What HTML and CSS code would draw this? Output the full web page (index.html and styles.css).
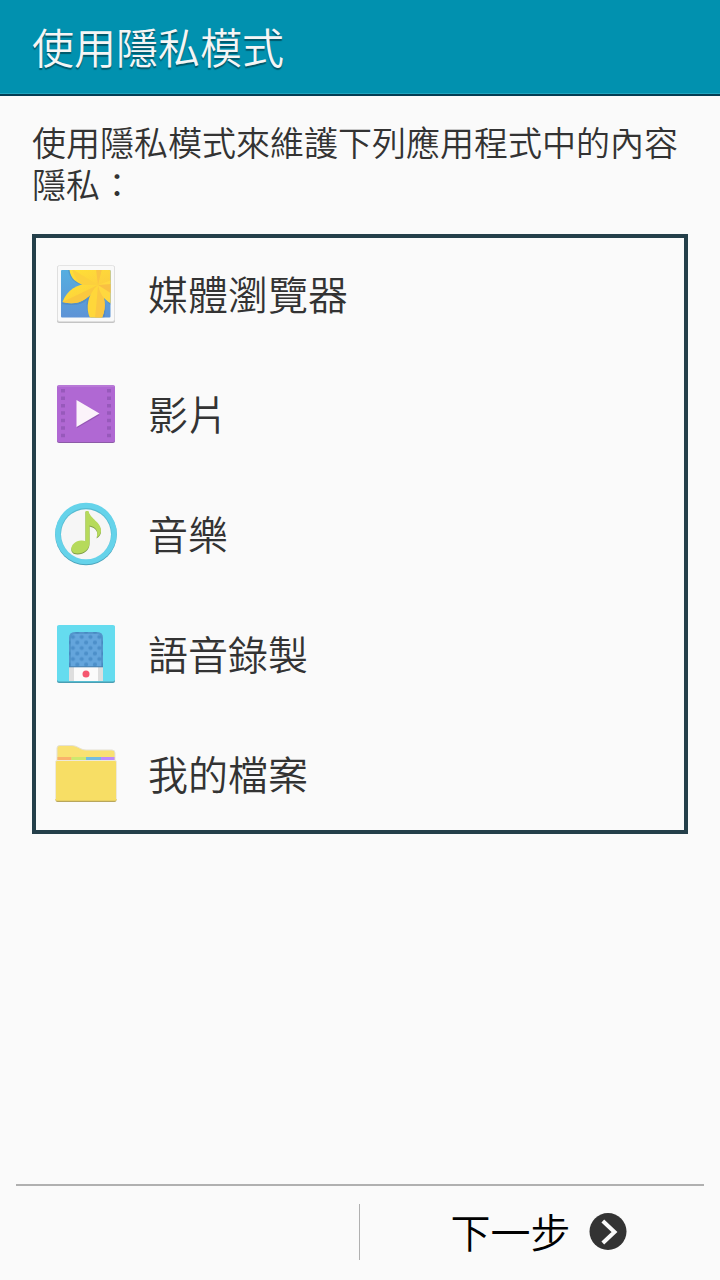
FILE: index.html
```html
<!DOCTYPE html>
<html lang="zh-Hant">
<head>
  <meta charset="UTF-8">
  <meta name="viewport" content="width=device-width, initial-scale=1.0">
  <title>使用隱私模式</title>
  <link rel="stylesheet" href="styles.css">
</head>
<body>

  <header class="title-bar">
    <h1>使用隱私模式</h1>
  </header>

  <main class="content">
    <p class="description">使用隱私模式來維護下列應用程式中的內容隱私：</p>

    <div class="app-box">
      <ul class="app-list">
        <li>
          <!-- Gallery -->
          <svg class="app-icon" viewBox="0 0 72 72">
            <defs>
              <linearGradient id="sky" x1="0" y1="0" x2="0" y2="1">
                <stop offset="0" stop-color="#55aee0"/>
                <stop offset="1" stop-color="#5e93d6"/>
              </linearGradient>
              <linearGradient id="petal" x1="0" y1="0" x2="1" y2="1">
                <stop offset="0" stop-color="#ffe135"/>
                <stop offset="1" stop-color="#fccb40"/>
              </linearGradient>
              <clipPath id="photo"><rect x="11" y="12" width="49.500" height="47.500" rx="1"/></clipPath>
            </defs>
            <rect x="7" y="8" width="58" height="57" rx="2" fill="#c4c4c4"/>
            <rect x="7.500" y="7.500" width="57" height="56" rx="2" fill="#f9f9f9" stroke="#dedede" stroke-width="0.800"/>
            <g clip-path="url(#photo)">
              <rect x="11" y="12" width="50" height="48" fill="url(#sky)"/>
              <path d="M18 11C19 21 25 25 32 27C23 30 18 36 12 46C23 48 32 47 37 42C36 49 37 56 42 61H54C56 53 56 47 54 40C57 43 59 46 62 48V11Z" fill="#416fa3" opacity="0.300"/>
              <path d="M19.500 11C20 20 26 25 34 27L48 28L62 24V11Z" fill="url(#petal)"/>
              <path d="M48 27C35 23 18 28 12.500 44C27 48 38 43 48 27Z" fill="url(#petal)"/>
              <path d="M48 27L12.500 44C27 48 38 43 48 27Z" fill="#fac83f"/>
              <path d="M48 27C38 35 35 50 40 60H52C57 48 55 38 48 27Z" fill="#ffd73a"/>
              <path d="M48 27C47 40 46 50 45 60H52C57 48 55 38 48 27Z" fill="#fbc742"/>
              <path d="M48 27C50 36 54 42 62 46V22Z" fill="#ffd83f"/>
              <path d="M48 27L62 36V26Z" fill="#f9c043"/>
              <path d="M22 11L48 27L34 27C29 25 24 19 22 11Z" fill="#fcd03d"/>
              <path d="M48 27L46 11H52Z" fill="#fac343"/>
            </g>
          </svg>
          <span>媒體瀏覽器</span>
        </li>
        <li>
          <!-- Video -->
          <svg class="app-icon" viewBox="0 0 72 72">
            <rect x="7" y="8" width="58" height="57" rx="2" fill="#8c5ba7"/>
            <rect x="7" y="7" width="58" height="57" rx="2" fill="#b068d3"/>
            <path d="M8 8H64" stroke="#c08adb"/>
            <g stroke="#9759bb" stroke-width="4" stroke-dasharray="3.500 3.950">
              <path d="M13 11V62M59 11V62"/>
            </g>
            <path d="M27 24L49.500 37L27 50Z" fill="#794596" opacity="0.500"/>
            <path d="M26.500 22L49.500 35.500L26.500 49Z" fill="#fbf3fa"/>
          </svg>
          <span>影片</span>
        </li>
        <li>
          <!-- Music -->
          <svg class="app-icon" viewBox="0 0 72 72">
            <circle cx="36" cy="36.500" r="30.800" fill="#4aa3bb"/>
            <circle cx="36" cy="35.500" r="30.800" fill="#65d3ea"/>
            <circle cx="36" cy="35.500" r="25.500" fill="#55bad0"/>
            <circle cx="36" cy="36.300" r="25" fill="#f6f6f6"/>
            <path d="M35.500 14H38.500C40 22 51.500 25 51 34C50.800 37 49 39 46.500 40.500C49 34 46 30 39.500 28.500V46C39.500 52 34 56.500 27.500 56.500C18 56.500 20 44.500 31 43.500C33 43.300 34.500 43.700 35.500 44.200Z" fill="#7d9c47"/>
            <path d="M35.500 13H38.500C40 21 51.500 24 51 33C50.800 36 49 38 46.500 39.500C49 33 46 29 39.500 27.500V45C39.500 51 34 55.500 27.500 55.500C18 55.500 20 43.500 31 42.500C33 42.300 34.500 42.700 35.500 43.200Z" fill="#b6da5b"/>
          </svg>
          <span>音樂</span>
        </li>
        <li>
          <!-- Voice recorder -->
          <svg class="app-icon" viewBox="0 0 72 72">
            <defs>
              <pattern id="mesh" x="20.500" y="14.500" width="8.800" height="11" patternUnits="userSpaceOnUse">
                <circle cx="2.400" cy="4.500" r="2.100" fill="#4c8fc9"/>
                <circle cx="6.800" cy="10" r="2.100" fill="#4c8fc9"/>
                <circle cx="6.800" cy="-1" r="2.100" fill="#4c8fc9"/>
              </pattern>
            </defs>
            <rect x="7" y="8" width="58" height="57" rx="2" fill="#4a9eb3"/>
            <rect x="7" y="7" width="58" height="56.500" rx="2" fill="#65dcef"/>
            <path d="M19 49V20Q19 14 25 14H47Q53 14 53 20V49Z" fill="#64a5dc"/>
            <path d="M19 49V20Q19 14 25 14H47Q53 14 53 20V49Z" fill="url(#mesh)"/>
            <path d="M19 49V20Q19 14 25 14H47Q53 14 53 20V49H51V20Q51 16 47 16H25Q21 16 21 20V49Z" fill="#3d7fb4" opacity="0.400"/>
            <rect x="19" y="49" width="34" height="14" fill="#dedede"/>
            <rect x="24" y="49" width="24" height="14" fill="#fbfbfb"/>
            <path d="M19 48.800H53" stroke="#467fad"/>
            <circle cx="36" cy="56" r="3.500" fill="#f55770"/>
          </svg>
          <span>語音錄製</span>
        </li>
        <li>
          <!-- My files -->
          <svg class="app-icon" viewBox="0 0 72 72">
            <path d="M7 25V10Q7 7.500 10 7.500H21C28 7.500 30 12 36 12H62Q65 12 65 15V25Z" fill="#f9e172" stroke="#e5e1d3"/>
            <rect x="7.500" y="19" width="14" height="4" fill="#fab26b"/>
            <rect x="21.500" y="19" width="14.500" height="4" fill="#cce86e"/>
            <rect x="36" y="19" width="15" height="4" fill="#72bde0"/>
            <rect x="51" y="19" width="13.500" height="4" fill="#bd8cfb"/>
            <rect x="5.500" y="24" width="61" height="40" rx="2" fill="#b8a65c"/>
            <rect x="5.500" y="22.500" width="61" height="40.300" rx="1.500" fill="#f7de65"/>
            <path d="M5.500 61V24Q5.500 22.500 7 22.500H65Q66.500 22.500 66.500 24V61" fill="none" stroke="#eee9d9"/>
          </svg>
          <span>我的檔案</span>
        </li>
      </ul>
    </div>
  </main>

  <footer class="bottom-bar">
    <div class="bottom-left"></div>
    <a class="next" href="#">
      <span>下一步</span>
      <svg class="next-icon" viewBox="0 0 38 38">
        <circle cx="19" cy="18.500" r="18.500" fill="#333"/>
        <path d="M13.800 8L25.500 19L13.800 30" fill="none" stroke="#fafafa" stroke-width="4"/>
      </svg>
    </a>
  </footer>

</body>
</html>
```
FILE: styles.css
```css
* {
  box-sizing: border-box;
}

body {
  margin: 0;
  height: 1280px;
  display: flex;
  flex-direction: column;
  background-color: #fafafa;
  color: #333;
  font-family: "Noto Sans CJK TC", sans-serif;
  font-weight: 350;
}

.title-bar {
  height: 96px;
  padding: 0 32px 2px;
  display: flex;
  align-items: center;
  background-color: #0191af;
  border-bottom: 2px solid #033c53;
  box-shadow: inset 0 -1px 0 #20a5bf;
}

.title-bar h1 {
  margin: 0;
  font-size: 42px;
  line-height: 60px;
  font-weight: 350;
  color: #f5f5f5;
  text-shadow: 0 2px 1px rgba(0, 0, 0, 0.4);
}

.content {
  flex: 1;
  padding: 25px 32px 0;
}

.description {
  margin: 0 0 29px;
  font-size: 34px;
  line-height: 42px;
}

.app-box {
  height: 600px;
  border: 4px solid #243f4a;
}

.app-list {
  list-style: none;
  margin: -4px 0;
  padding: 0;
}

.app-list li {
  height: 120px;
  padding-left: 14px;
  display: flex;
  align-items: center;
  gap: 26px;
  font-size: 40px;
  line-height: 60px;
}

.app-list span,
.next span {
  padding-bottom: 2px;
}

.app-icon {
  width: 72px;
  height: 72px;
}

.bottom-bar {
  height: 96px;
  margin: 0 16px;
  padding: 18px 0 20px;
  display: flex;
  border-top: 2px solid #b0b0b0;
}

.bottom-left {
  width: 344px;
  border-right: 1px solid #b0b0b0;
}

.next {
  flex: 1;
  padding-left: 13px;
  display: flex;
  align-items: center;
  justify-content: center;
  gap: 18px;
  color: #000;
  font-size: 40px;
  line-height: 54px;
  text-decoration: none;
}

.next-icon {
  width: 38px;
  height: 38px;
}
```
